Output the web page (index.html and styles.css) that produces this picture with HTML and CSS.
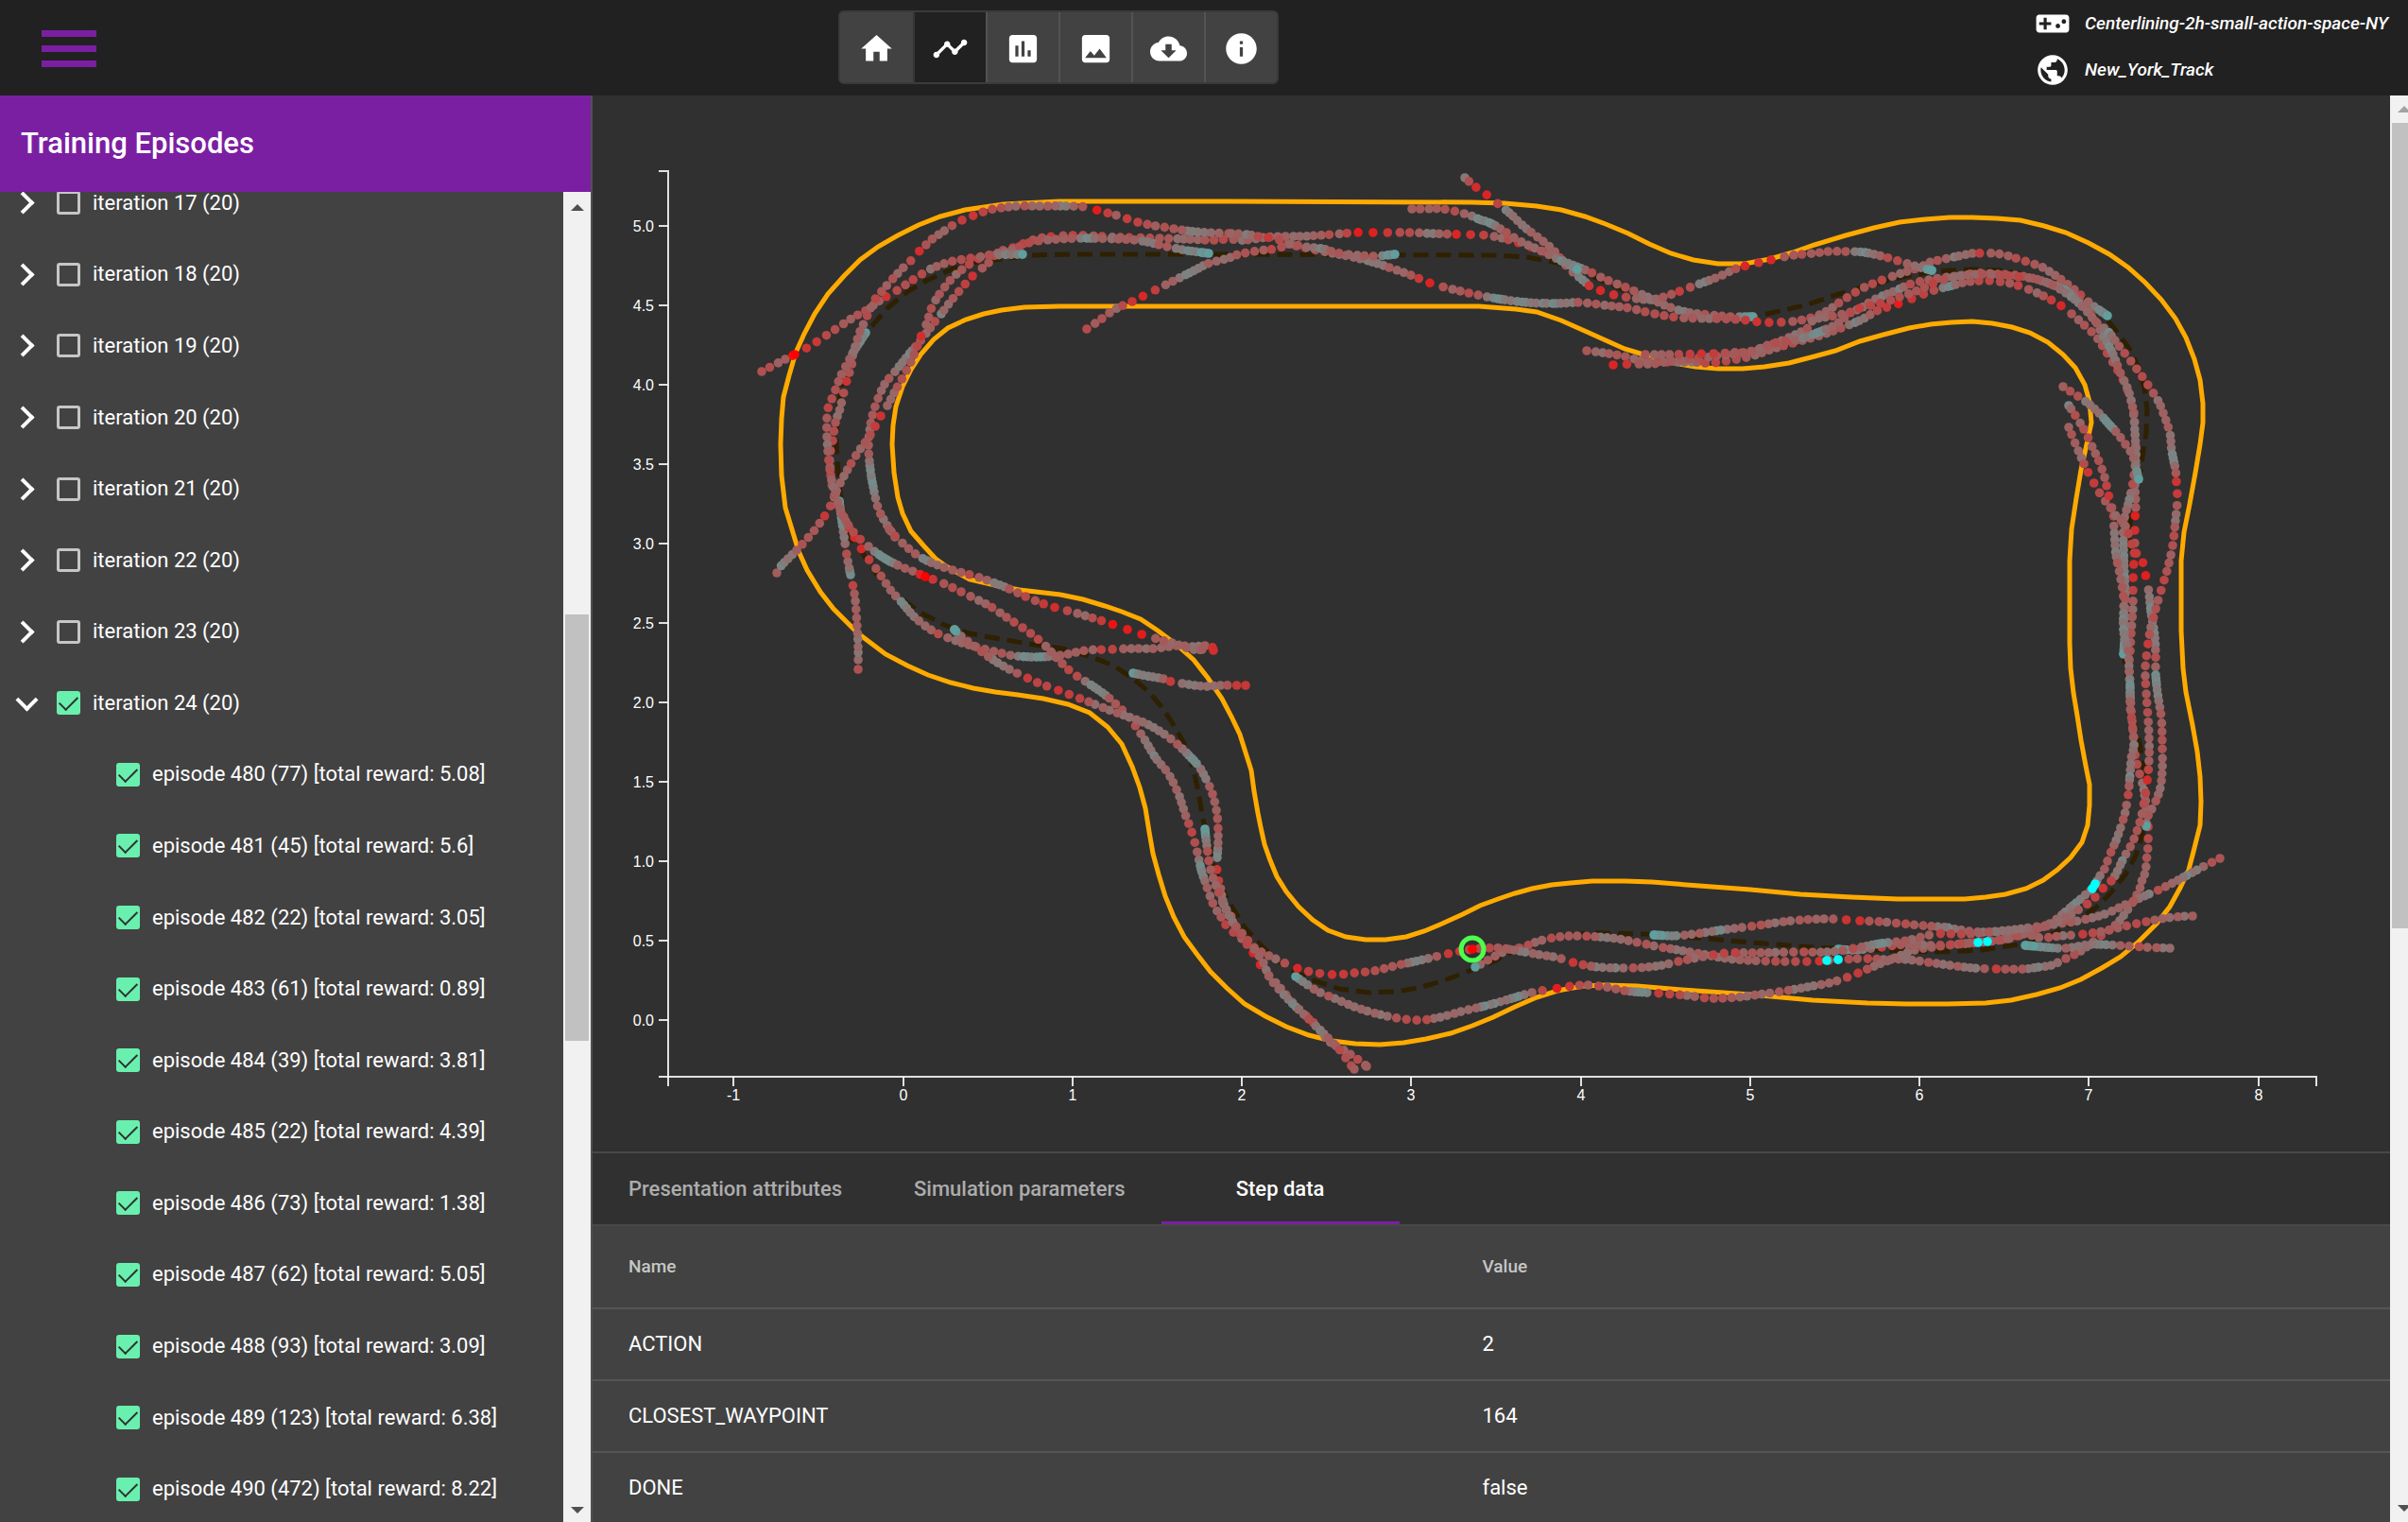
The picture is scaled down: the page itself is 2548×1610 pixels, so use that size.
FILE: index.html
```html
<!DOCTYPE html>
<html lang="en">
<head>
<meta charset="utf-8">
<title>Training Episodes</title>
<link rel="stylesheet" href="styles.css">
</head>
<body>
<header class="topbar">
  <button class="menu" aria-label="Menu"><span></span><span></span><span></span></button>
  <nav class="views">
    <button aria-label="Home"><svg viewBox="0 0 24 24"><path d="M10 20v-6h4v6h5v-8h3L12 3 2 12h3v8z"/></svg></button>
    <button class="on" aria-label="Track"><svg viewBox="0 0 24 24"><path d="M23 8c0 1.1-.9 2-2 2-.18 0-.35-.02-.51-.07l-3.56 3.55c.05.16.07.34.07.52 0 1.1-.9 2-2 2s-2-.9-2-2c0-.18.02-.36.07-.52l-2.55-2.55c-.16.05-.34.07-.52.07s-.36-.02-.52-.07l-4.55 4.56c.05.16.07.33.07.51 0 1.1-.9 2-2 2s-2-.9-2-2 .9-2 2-2c.18 0 .35.02.51.07l4.56-4.55C8.02 9.36 8 9.18 8 9c0-1.1.9-2 2-2s2 .9 2 2c0 .18-.02.36-.07.52l2.55 2.55c.16-.05.34-.07.52-.07s.36.02.52.07l3.55-3.56C19.02 8.35 19 8.18 19 8c0-1.1.9-2 2-2s2 .9 2 2z"/></svg></button>
    <button aria-label="Statistics"><svg viewBox="0 0 24 24"><path d="M19 3H5c-1.1 0-2 .9-2 2v14c0 1.1.9 2 2 2h14c1.1 0 2-.9 2-2V5c0-1.1-.9-2-2-2zM9 17H7v-7h2v7zm4 0h-2V7h2v10zm4 0h-2v-4h2v4z"/></svg></button>
    <button aria-label="Images"><svg viewBox="0 0 24 24"><path d="M21 19V5c0-1.1-.9-2-2-2H5c-1.1 0-2 .9-2 2v14c0 1.1.9 2 2 2h14c1.1 0 2-.9 2-2zM8.500 13.500l2.500 3.010L14.500 12l4.500 6H5l3.500-4.500z"/></svg></button>
    <button aria-label="Download"><svg viewBox="0 0 24 24"><path d="M19.350 10.040C18.670 6.590 15.640 4 12 4 9.110 4 6.600 5.640 5.350 8.040 2.340 8.360 0 10.910 0 14c0 3.310 2.690 6 6 6h13c2.760 0 5-2.240 5-5 0-2.640-2.050-4.780-4.650-4.960zM17 13l-5 5-5-5h3V9h4v4h3z"/></svg></button>
    <button aria-label="About"><svg viewBox="0 0 24 24"><path d="M12 2C6.480 2 2 6.480 2 12s4.480 10 10 10 10-4.480 10-10S17.520 2 12 2zm1 15h-2v-6h2v6zm0-8h-2V7h2v2z"/></svg></button>
  </nav>
  <div class="session">
    <div class="fact"><svg viewBox="0 0 24 24"><path d="M21 6H3c-1.100 0-2 .9-2 2v8c0 1.100.9 2 2 2h18c1.100 0 2-.9 2-2V8c0-1.100-.9-2-2-2zm-10 7H8v3H6v-3H3v-2h3V8h2v3h3v2zm4.500 2c-.83 0-1.500-.67-1.500-1.500s.67-1.500 1.500-1.500 1.500.67 1.500 1.500-.67 1.500-1.500 1.500zm4-3c-.83 0-1.500-.67-1.500-1.500S18.670 9 19.500 9s1.500.67 1.500 1.500-.67 1.500-1.500 1.500z"/></svg><span>Centerlining-2h-small-action-space-NY</span></div>
    <div class="fact"><svg viewBox="0 0 24 24"><path d="M12 2C6.480 2 2 6.480 2 12s4.480 10 10 10 10-4.480 10-10S17.520 2 12 2zm-1 17.930c-3.950-.49-7-3.850-7-7.930 0-.62.08-1.210.21-1.790L9 15v1c0 1.100.9 2 2 2v1.930zm6.900-2.540c-.26-.81-1-1.390-1.900-1.390h-1v-3c0-.55-.45-1-1-1H8v-2h2c.55 0 1-.45 1-1V7h2c1.100 0 2-.9 2-2v-.41c2.930 1.190 5 4.060 5 7.410 0 2.080-.8 3.970-2.100 5.390z"/></svg><span>New_York_Track</span></div>
  </div>
</header>
<div class="body">
  <aside class="side">
    <h1>Training Episodes</h1>
    <div class="pane">
      <ul class="tree" id="tree">
        <li><button class="twist" aria-label="Expand"></button><input type="checkbox" id="i17"><label for="i17">iteration 17 (20)</label></li>
        <li><button class="twist" aria-label="Expand"></button><input type="checkbox" id="i18"><label for="i18">iteration 18 (20)</label></li>
        <li><button class="twist" aria-label="Expand"></button><input type="checkbox" id="i19"><label for="i19">iteration 19 (20)</label></li>
        <li><button class="twist" aria-label="Expand"></button><input type="checkbox" id="i20"><label for="i20">iteration 20 (20)</label></li>
        <li><button class="twist" aria-label="Expand"></button><input type="checkbox" id="i21"><label for="i21">iteration 21 (20)</label></li>
        <li><button class="twist" aria-label="Expand"></button><input type="checkbox" id="i22"><label for="i22">iteration 22 (20)</label></li>
        <li><button class="twist" aria-label="Expand"></button><input type="checkbox" id="i23"><label for="i23">iteration 23 (20)</label></li>
        <li><button class="twist open" aria-label="Collapse"></button><input type="checkbox" id="i24" checked><label for="i24">iteration 24 (20)</label></li>
        <li class="leaf"><input type="checkbox" id="e480" checked><label for="e480">episode 480 (77) [total reward: 5.08]</label></li>
        <li class="leaf"><input type="checkbox" id="e481" checked><label for="e481">episode 481 (45) [total reward: 5.6]</label></li>
        <li class="leaf"><input type="checkbox" id="e482" checked><label for="e482">episode 482 (22) [total reward: 3.05]</label></li>
        <li class="leaf"><input type="checkbox" id="e483" checked><label for="e483">episode 483 (61) [total reward: 0.89]</label></li>
        <li class="leaf"><input type="checkbox" id="e484" checked><label for="e484">episode 484 (39) [total reward: 3.81]</label></li>
        <li class="leaf"><input type="checkbox" id="e485" checked><label for="e485">episode 485 (22) [total reward: 4.39]</label></li>
        <li class="leaf"><input type="checkbox" id="e486" checked><label for="e486">episode 486 (73) [total reward: 1.38]</label></li>
        <li class="leaf"><input type="checkbox" id="e487" checked><label for="e487">episode 487 (62) [total reward: 5.05]</label></li>
        <li class="leaf"><input type="checkbox" id="e488" checked><label for="e488">episode 488 (93) [total reward: 3.09]</label></li>
        <li class="leaf"><input type="checkbox" id="e489" checked><label for="e489">episode 489 (123) [total reward: 6.38]</label></li>
        <li class="leaf"><input type="checkbox" id="e490" checked><label for="e490">episode 490 (472) [total reward: 8.22]</label></li>
      </ul>
      <div class="bar bar-side"><i class="arrow up"></i><i class="before"></i><i class="thumb"></i><i class="after"></i><i class="arrow down"></i></div>
    </div>
  </aside>
  <main class="main">
    <div class="content">
      <svg class="chart" id="chart" viewBox="627 101 1902 1117" role="img" aria-label="Track with episode steps"></svg>
      <div class="tabs" role="tablist">
        <button role="tab">Presentation attributes</button>
        <button role="tab">Simulation parameters</button>
        <button role="tab" class="on" aria-selected="true">Step data</button>
      </div>
      <table class="steps">
        <thead><tr><th>Name</th><th>Value</th></tr></thead>
        <tbody>
          <tr><td>ACTION</td><td>2</td></tr>
          <tr><td>CLOSEST_WAYPOINT</td><td>164</td></tr>
          <tr><td>DONE</td><td>false</td></tr>
        </tbody>
      </table>
    </div>
    <div class="bar bar-main"><i class="arrow up dim"></i><i class="thumb"></i><i class="after"></i><i class="arrow down"></i></div>
  </main>
</div>
<script src="chart.js"></script>
</body>
</html>
```
FILE: styles.css
```css
* { box-sizing: border-box; }
body {
  margin: 0;
  height: 100vh;
  display: flex;
  flex-direction: column;
  overflow: hidden;
  background: #303030;
  color: #fff;
  font: 22px/32px Roboto, "Liberation Sans", sans-serif;
}
button { font: inherit; color: inherit; border: 0; background: none; padding: 0; }

.topbar {
  flex: 0 0 101px;
  display: flex;
  justify-content: space-between;
  align-items: flex-start;
  padding-left: 44px;
  background: #212121;
}
.menu { width: 58px; margin-top: 32px; display: grid; gap: 9px; }
.menu span { height: 7px; background: #7b1fa2; }
.views {
  display: flex;
  height: 78px;
  margin-top: 11px;
  border: 2px solid #3a3a3a;
  border-radius: 6px;
  background: #424242;
  overflow: hidden;
}
.views button { width: 77px; padding-top: 3px; display: grid; place-items: center; }
.views button + button { border-left: 2px solid #535353; }
.views button.on { background: #212121; border-left-color: #363636; }
.views svg { width: 39px; height: 39px; fill: #fff; }
.session { flex: 0 0 411px; padding-left: 16px; }
.fact { display: flex; align-items: center; gap: 15px; height: 49px; font-size: 19px; font-weight: 500; font-style: italic; white-space: nowrap; }
.fact svg { width: 38px; height: 38px; fill: #fff; }

.body { flex: 1; min-height: 0; display: flex; }
.side {
  flex: 0 0 627px;
  display: flex;
  flex-direction: column;
  background: #424242;
  border-right: 2px solid #515151;
}
.side h1 {
  flex: 0 0 101px;
  margin: 0;
  padding-left: 22px;
  line-height: 102px;
  font-size: 31px;
  font-weight: 500;
  background: #7b1fa2;
}
.pane { flex: 1; min-height: 0; display: flex; overflow: hidden; }
.tree {
  flex: 1;
  margin: -26px 0 -3px;
  padding: 0;
  list-style: none;
  display: grid;
  grid-auto-rows: minmax(60px, 1fr);
}
.tree li { display: flex; align-items: center; padding-left: 16px; }
.tree .leaf { padding-left: 123px; }
.twist { width: 26px; height: 26px; margin-right: 18px; display: grid; place-items: center; }
.twist::before {
  content: "";
  width: 13px;
  height: 13px;
  border: solid #fff;
  border-width: 4px 4px 0 0;
  transform: translateX(-5px) rotate(45deg);
}
.twist.open::before { transform: translate(-1px, -3px) rotate(135deg); }
.tree input {
  appearance: none;
  width: 25px;
  height: 25px;
  margin: 0 13px 0 0;
  border: 3px solid #c6c6c6;
  border-radius: 3px;
  display: grid;
  place-items: center;
}
.tree input:checked { border: 0; background: #69f0ae; }
.tree input:checked::before {
  content: "";
  width: 9px;
  height: 17px;
  border: solid #303030;
  border-width: 0 2px 2px 0;
  transform: translateY(-2px) rotate(45deg);
}

.bar { display: flex; flex-direction: column; background: #f1f1f1; overflow: hidden; }
.arrow { flex: 0 0 29px; width: 29px; display: grid; place-items: center; }
.arrow::before {
  content: "";
  border: 7px solid transparent;
  border-top-width: 0;
  border-bottom-color: #505050;
}
.arrow.down::before { border-width: 7px 7px 0; border-top-color: #505050; }
.arrow.dim::before { border-bottom-color: #a3a3a3; }
.thumb { width: 25px; margin-left: 2px; background: #c1c1c1; }
.bar-side { flex: 0 0 29px; }
.bar-side .arrow { padding-top: 3px; }
.bar-side .before { flex: 418; }
.bar-side .thumb { flex: 452; }
.bar-side .after { flex: 480; }
.bar-main { flex: 0 0 19px; }
.bar-main .thumb { flex: 852; }
.bar-main .after { flex: 599; }

.main { flex: 1; min-width: 0; display: flex; }
.content { flex: 1; min-width: 0; overflow: hidden; background: #424242; }
.chart { display: block; width: 100%; height: auto; background: #303030; }
.edge { fill: none; stroke: #ffaa00; stroke-width: 5; }
.center { fill: none; stroke: #2e2000; stroke-width: 5; stroke-dasharray: 16 8; }
.axis { fill: none; stroke: #fff; stroke-width: 2; stroke-opacity: .85; }
.tick { fill: #fff; font: 16px "Liberation Sans", Arial, sans-serif; }
.picked { fill: none; stroke: #4dff4d; stroke-width: 5; }

.tabs {
  display: flex;
  height: 79px;
  border: solid #484848;
  border-width: 2px 0;
  background: #303030;
}
.tabs button { min-width: 252px; padding: 3px 38px 0; font-weight: 500; color: #acacac; border-bottom: 3px solid transparent; }
.tabs button.on { color: #fff; border-color: #7b1fa2; }
.steps { width: 100%; border-collapse: collapse; table-layout: fixed; }
.steps th, .steps td { height: 76px; padding: 0 0 0 38px; text-align: left; border-bottom: 2px solid #555; }
.steps th { height: 87px; font-size: 19px; font-weight: 500; color: #c6c6c6; }
.steps th:first-child { width: 49.5%; }
.steps th + th, .steps td + td { padding-left: 0; }
```
FILE: chart.js
```js
// Track borders and centre line, in chart coordinates.
const OUTER = "1121,213 1062,216 1021,222 995,229 972,238 950,249 929,261 910,275 893,292 876,311 862,332 851,353 842,373 835,397 829,420 827,443 826,470 827,503 831,537 838,560 845,583 854,603 868,626 882,644 908,670 937,692 960,704 982,714 1006,722 1030,728 1053,732 1077,735 1104,739 1130,745 1153,754 1172,769 1187,787 1198,811 1206,833 1212,855 1216,880 1220,903 1226,925 1233,948 1242,970 1253,991 1267,1010 1281,1028 1298,1045 1317,1062 1339,1075 1361,1086 1385,1095 1409,1101 1434,1104 1460,1105 1485,1103 1509,1099 1535,1093 1558,1085 1580,1076 1603,1065 1626,1055 1648,1048 1675,1043 1699,1042 1732,1043 1780,1047 1852,1052 1918,1058 1976,1061 2017,1062 2061,1062 2101,1061 2128,1058 2155,1052 2180,1045 2202,1036 2224,1024 2244,1012 2262,997 2282,977 2296,959 2307,939 2316,920 2322,897 2328,873 2329,848 2328,822 2325,795 2320,767 2313,732 2310,707 2308,667 2308,633 2308,593 2311,563 2317,533 2323,500 2328,470 2331,447 2331,427 2328,402 2322,380 2313,357 2302,337 2287,317 2270,299 2252,283 2232,269 2210,257 2186,246 2163,239 2138,233 2113,231 2087,230 2063,230 2037,232 2010,235 1983,241 1953,249 1920,259 1897,267 1873,274 1846,279 1818,279 1792,275 1768,268 1745,258 1723,247 1699,237 1677,229 1652,222 1626,218 1592,215 1557,214 1300,213";
const INNER = "1300,324 1121,324 1084,325 1060,328 1041,332 1022,338 1003,347 988,359 975,374 964,391 955,409 948,430 945,450 944,470 946,500 950,526 955,543 964,562 978,578 990,591 1001,599 1026,613 1057,620 1079,624 1122,629 1146,634 1169,641 1187,647 1207,655 1225,667 1245,682 1263,698 1278,717 1293,739 1303,758 1312,777 1318,796 1324,815 1327,837 1331,860 1334,875 1338,893 1344,910 1351,927 1361,943 1374,959 1389,973 1405,984 1424,991 1445,994 1466,994 1488,991 1507,985 1526,977 1548,967 1566,958 1585,951 1603,945 1621,940 1642,936 1662,934 1685,932 1719,932 1748,933 1798,937 1852,941 1905,946 1959,949 2008,951 2048,951 2079,951 2101,949 2122,946 2144,940 2162,931 2177,920 2191,907 2203,891 2209,873 2211,852 2211,830 2207,810 2202,783 2198,757 2194,733 2191,707 2190,680 2190,633 2190,593 2192,560 2197,527 2202,497 2208,470 2213,447 2211,425 2206,407 2196,389 2183,375 2167,362 2148,352 2129,346 2108,342 2087,340 2065,341 2043,343 2020,347 1993,354 1968,361 1942,371 1920,377 1893,384 1867,388 1844,390 1818,390 1794,388 1766,383 1739,375 1719,369 1699,360 1679,351 1652,339 1626,330 1604,327 1565,324";
const CENTER = "1300,269 1133,269 1092,270 1027,278 1011,283 980,297 958,310 940,325 925,342 913,357 901,377 892,403 886,437 885,470 887,500 890,533 901,570 914,587 928,608 946,627 972,647 999,661 1026,670 1053,675 1088,681 1124,686 1155,695 1178,704 1198,717 1216,732 1231,750 1245,772 1256,792 1263,815 1268,837 1272,862 1276,880 1285,920 1298,950 1317,981 1336,1002 1362,1024 1389,1037 1417,1046 1448,1050 1476,1049 1501,1045 1526,1038 1552,1028 1581,1017 1609,1002 1650,990 1687,987 1740,988 1807,993 1865,998 1918,1002 1985,1005 2052,1007 2097,1005 2142,998 2168,990 2195,975 2218,960 2233,945 2249,925 2260,905 2267,883 2270,850 2268,807 2263,782 2257,757 2248,697 2247,633 2252,577 2254,553 2262,517 2267,483 2271,457 2272,433 2269,410 2262,387 2252,367 2237,347 2217,323 2183,303 2150,292 2117,286 2083,285 2050,287 2017,292 1977,302 1943,312 1910,323 1865,333 1814,337 1751,321 1707,302 1675,288 1648,278 1616,272 1584,270";

// Episode paths: x,y or x,y,throttle (0 = cyan, 1 = red).
const EPISODES = [
  "947,568 937,553 929,537 924,515,.45 921,497,.48 919,473 921,450 925,433 931,417 937,405 948,392 960,377,.5 972,363 982,350 991,338 996,332,.45 1005,320 1020,302 1028,293,.8 1045,279 1056,267 1072,262 1096,253 1116,250,.8 1146,249 1182,251 1227,252 1256,253,.45 1282,254 1300,253,.78 1316,254 1340,251 1357,250 1377,250 1395,249 1422,247 1432,246,.8 1458,246,.78 1494,246 1513,247,.5 1545,248,.85 1573,249 1594,253 1622,262,.9 1644,270 1656,277,.45 1668,282,.45 1681,287 1700,296 1725,306 1747,316 1764,324 1784,330,.45 1808,333 1832,335 1855,335,.38",
  "822,606 827,598,.5 843,582 854,570 864,558 875,542,.8 881,530 888,513 905,483 921,460 932,440,.8 939,429 948,412 957,396 966,378 976,352,.82 981,341 986,325 995,310 1007,295 1021,283 1039,272 1068,265 1092,256 1121,253 1150,252,.45 1186,253 1209,255,.5 1231,260 1256,265,.5 1279,268,.38",
  "806,393 829,381 841,375,1 850,370 859,365,.88 880,351 901,337 917,328,.75 928,320 939,313,.8 948,308 957,302 972,292 986,284,.48 1005,277 1028,273 1052,270 1082,269,.38",
  "908,708 908,685 907,663 905,635 903,622,.78 900,608,.5 896,587 892,560,.5 888,530,.38",
  "916,352,.38 911,360,.45 903,373 901,387 895,406,.85 889,432,.48 884,447 881,467 878,483 879,503 882,520 890,543 896,553 905,570,.8 915,586,.8 928,603 943,625 955,638,.5 968,653,.48 988,668 1012,678 1035,685 1064,692 1075,694,.42 1099,695,.42 1124,693 1149,688 1175,687,.75 1200,686 1222,686 1245,683 1262,684,.5 1280,683 1284,688,.82",
  "1300,247 1263,245 1236,241 1217,238 1204,235,.8 1182,228 1160,222,.85 1150,219 1129,218,.5 1099,218 1077,218 1052,221 1041,224 1020,232,.8 1007,239 998,245 985,254 977,262 968,270,.85 962,278 955,284 941,299 935,306 925,318 915,340 909,353 903,372 890,397 882,418 876,433 875,462 879,503 885,525 892,545 903,563 919,578 929,586,.45 940,593,.45 957,601 968,605 979,610,1 998,617 1019,627 1047,641 1065,653 1082,664 1097,675 1108,685,.5 1120,698 1135,712 1155,725,.5 1173,738 1193,757 1209,779 1223,802,.5 1236,818 1247,840,.48 1254,861 1262,883,.78 1267,902 1271,920,.42 1276,935 1284,957 1294,973 1300,982,.8 1315,994 1326,1008,.9 1336,1024,.8 1352,1042 1372,1065 1393,1085 1407,1102,.5 1424,1112 1440,1123 1446,1128",
  "1303,247 1319,248,.55 1337,251,.8 1349,252 1363,258 1385,263 1405,267 1422,270 1448,276,.5 1470,283 1490,290 1515,300,.78 1537,306 1559,311 1585,316,.48 1616,320,.42 1648,321,.45 1672,320 1699,323 1724,326 1751,332 1778,336 1810,337 1840,338 1867,341,.8 1897,340 1920,335 1935,328 1945,321 1967,307 1987,298 2015,288 2033,282 2043,277 2053,275 2067,272,.45 2087,268 2097,268,.8 2118,269 2154,280 2165,285,.5 2180,295 2197,308 2213,322 2230,334,.38",
  "1150,348 1166,337 1180,327 1198,319,.8 1218,309,.82 1240,298 1264,286,.5 1278,279 1300,273 1311,269 1333,265 1351,263,.8 1365,258 1379,261 1399,263,.45 1418,268 1452,271 1476,269,.38",
  "1550,188,.5 1559,196,.85 1569,203 1577,209,.95 1588,218 1598,226,.5 1614,241 1630,253 1644,265 1658,282 1677,298,.5 1683,303,.8 1704,311,.85 1725,315 1747,317 1764,313 1780,307,.8 1799,300,.48 1818,293 1835,285 1848,281,.8 1873,275,.85 1897,270 1919,268 1935,266 1953,266 1973,267,.45 1995,272 2015,278 2032,283 2044,286,.38",
  "1494,221 1506,221 1527,221 1553,227 1565,232,.42 1577,236,.42 1594,246 1608,255 1634,267 1656,278,.45 1669,285,.38",
  "1679,371 1695,373 1719,377 1739,382 1762,383 1790,383,.5 1810,384,.8 1832,381 1853,377 1873,370 1897,363 1915,358 1932,353 1953,345 1970,338,.45 1988,328 2007,322,.8 2028,314 2047,307 2062,303,.45 2083,298 2107,297 2128,300 2138,303,.8 2158,311 2177,321,.9 2187,328 2200,339 2217,355 2228,371 2238,387 2247,403 2253,418,.75 2258,437 2259,453,.75 2260,477 2260,493,.75 2259,513 2260,533 2259,551,.92 2259,570 2258,593,.78 2257,617,.88 2257,640 2255,670 2254,690 2253,702,.8 2254,733,.42 2255,750 2257,773 2259,797,.75 2263,815,.8 2268,833 2271,853 2273,873,.8 2273,893 2272,903 2270,922 2266,933 2263,943 2253,960 2239,978 2220,992 2213,998 2200,1007 2186,1014 2171,1021 2157,1023,.48 2142,1025 2110,1025,.8 2088,1024,.42 2070,1022 2048,1019 2017,1015 1994,1015 1968,1014 1933,1016,.8 1918,1017,.8 1883,1017 1852,1016 1827,1014 1805,1010 1776,1005 1752,1001 1728,996 1703,992 1670,990 1650,991 1630,995 1611,1002,.78 1595,1005 1572,1017 1561,1023,.38",
  "1707,386,.8 1731,385 1748,385 1762,383 1786,380 1814,377 1845,373 1865,368 1893,357 1913,347 1920,338 1947,333 1967,327 1983,317 2007,307,.5 2023,300 2047,295 2070,292 2092,289 2113,290 2140,292 2163,298 2183,306,.42 2200,318 2213,333,.75 2220,345 2235,373,.5 2243,393 2252,413 2257,433 2259,457 2260,483 2257,510 2252,533,.45 2247,553 2247,577,.5 2248,607,.42 2249,633 2249,660,.5 2247,692,.38",
  "2189,452 2195,467 2204,488 2208,497,.8 2213,506,.8 2222,522 2230,533 2236,543,.8 2237,560 2239,587,.5 2243,607 2247,633 2247,667,.45 2252,690 2253,710 2254,727,.42 2254,747 2256,763 2258,787,.5 2255,803 2254,818,.42 2252,840 2249,858 2245,872 2240,887,.5 2233,903 2226,921 2221,928,.5 2214,940 2206,947,.48 2191,960,.48 2169,977 2142,988 2120,994 2093,997 2070,999 2044,1002 2026,1005 2008,1012,.5 1981,1023 1962,1031,.8 1939,1039 1918,1043,.48 1890,1048 1861,1052 1838,1055 1810,1056 1785,1053 1760,1051,.8 1742,1050,.5 1719,1048 1699,1044 1675,1042 1644,1046,.8 1621,1050 1597,1057,.48 1572,1064,.42 1550,1069 1524,1076 1505,1079,.75 1485,1078 1468,1075,.55 1452,1071 1433,1065 1414,1057 1395,1049 1381,1040,.45 1371,1033,.38",
  "2189,429,.5 2197,441 2206,456 2214,473 2221,488 2227,505 2231,523,.82 2237,543 2247,553 2253,567,.8 2258,582,.8 2266,591,.78 2269,603,.78 2272,616,.78 2274,628,.5 2276,647,.42 2280,673,.48 2281,697 2281,713,.42 2283,733,.45 2287,760 2288,790 2288,813 2286,833 2280,850 2273,863 2271,874,.38",
  "2183,409 2197,418 2210,427,.5 2222,438,.48 2230,447,.42 2240,458 2249,470 2257,483 2263,507,.38",
  "2349,908 2333,916 2316,925,.5 2299,934 2283,942 2271,947,.5 2249,957 2227,967 2200,974 2173,978 2142,984 2097,986 2070,983 2059,981,.5 2034,979 2012,977 1990,975 1968,974,.78 1936,972 1909,973 1887,975 1860,979 1836,982 1820,984,.45 1793,988 1771,990,.45 1750,989,.38",
  "2296,1003 2271,1002 2240,1000 2213,999,.5 2186,1003 2164,1002,.45 2143,1000,.38",
  "2320,969 2314,969,.5 2293,971 2271,975 2252,979,.75 2231,984 2206,988,.75 2181,990 2159,992 2142,988 2119,994 2079,998 2048,1000 2017,999 1990,1002 1963,1005,.45 1945,1004,.38",
  "1741,375 1768,375 1812,374,.75 1834,373 1853,372 1877,363 1900,360 1923,352,.42 1943,343 1963,328 1993,320,.8 2013,313 2030,307 2048,299,.85 2073,292 2100,290 2127,292 2153,295 2173,302 2193,315,.45 2207,328 2220,343 2230,350,.42 2243,367 2257,385 2270,403 2283,423,.5 2289,437 2296,458 2298,477,.42 2302,497 2303,512,.78 2304,528 2302,550 2299,577 2294,600 2288,620 2283,637 2279,652,.8 2275,668 2272,688,.78 2270,708 2271,733 2273,760 2274,780 2274,803 2272,827,.85 2269,847 2265,867 2257,890 2247,908,.5 2237,928 2229,936,.8 2221,944 2213,953,.85 2195,965 2173,977 2142,982 2115,985 2081,988 2048,988 2017,995 1990,998,.45 1963,1003 1936,1007,.42 1901,1007 1860,1008 1829,1008,.75 1802,1012 1776,1017 1753,1022,.45 1723,1024 1691,1023,.5 1668,1019,.8 1648,1013 1630,1010 1613,1007,.5 1589,1003 1573,1003 1558,1004,.7 1536,1008,.8 1515,1013 1493,1018,.55 1479,1021 1454,1027 1434,1029 1414,1031,.78 1392,1029,.78 1372,1024,.82 1347,1013 1328,1003 1311,987 1303,970 1295,957,.42 1291,937 1288,925,.85 1288,908,.42 1289,887 1288,863 1283,840 1275,822,.48 1268,810,.5 1254,795,.5 1238,781 1216,767 1196,759 1176,752 1151,742 1122,731,.85 1100,723 1093,720,.85 1066,707 1048,696 1030,683 1017,673 1010,666,.38",
  "941,560 948,568 966,584 981,593,.45 1001,601 1030,609 1048,615,.5 1068,623 1092,634 1111,641,.8 1137,648,.55 1160,655 1173,659,.88 1205,670,.88 1225,676 1240,680 1262,687 1272,687",
  "1275,877,.38 1276,887,.45 1278,902 1281,920 1289,943 1303,973 1319,993 1336,1017,.45 1344,1035 1364,1058,.5 1385,1078 1397,1090,.45 1417,1110 1428,1125 1433,1131",
  "1199,712,.38 1213,715,.5 1231,718 1239,721,.78 1251,723,.48 1274,726 1292,725 1305,725,.78 1318,725,.78"
];
const MATCHES = ["1933,1016", "1945,1015", "2093,997", "2103,996", "2214,940", "2217,935"];
const FASTEST = ["841,375", "979,610"];

const chart = document.getElementById("chart");
function add(tag, attrs, text) {
  const el = document.createElementNS("http://www.w3.org/2000/svg", tag);
  for (const k in attrs) el.setAttribute(k, attrs[k]);
  if (text) el.textContent = text;
  chart.append(el);
}
function dot(x, y, fill) {
  add("circle", { cx: x.toFixed(1), cy: y.toFixed(1), r: 4.8, fill: fill });
}
function mix(t) {
  const r = Math.round(255 * t), g = Math.round(255 * (1 - t));
  return `rgb(${r},${g},${g})`;
}
let seed = 11;
function random() {
  seed = (seed * 16807) % 2147483647;
  return seed / 2147483647;
}
function spline(a, b, c, d, u) {
  return 0.5 * (2 * b + (c - a) * u + (2 * a - 5 * b + 4 * c - d) * u * u + (3 * b - a - 3 * c + d) * u * u * u);
}
function level(point) {
  const t = point[2] || 0.64;
  return t > 0.4 && t < 0.5 ? t + 0.04 : t;
}

add("path", { class: "center", d: "M" + CENTER.split(" ").join("L") + "Z" });
add("path", { class: "edge", d: "M" + OUTER.split(" ").join("L") + "Z" });
add("path", { class: "edge", d: "M" + INNER.split(" ").join("L") + "Z" });

for (const line of EPISODES) {
  const p = line.split(" ").map(s => s.split(",").map(Number));
  let left = 0, px = p[0][0], py = p[0][1], drift = 0;
  for (let i = 0; i < p.length - 1; i++) {
    const a = p[Math.max(0, i - 1)], b = p[i], c = p[i + 1], d = p[Math.min(p.length - 1, i + 2)];
    const floor = b[2] === 0.38 || c[2] === 0.38 ? 0.37 : 0.45;
    for (let k = 0; k <= 24; k++) {
      const u = k / 24;
      const x = spline(a[0], b[0], c[0], d[0], u), y = spline(a[1], b[1], c[1], d[1], u);
      left -= Math.hypot(x - px, y - py);
      px = x; py = y;
      if (left > 0) continue;
      drift = drift * 0.5 + (random() - 0.5) * 0.14;
      const base = level(b) * (1 - u) + level(c) * u;
      const t = Math.max(floor, Math.min(0.93, base + drift));
      dot(x, y, mix(t));
      left = 2.5 + Math.max(0, t - 0.42) * 27;
    }
  }
  const end = p[p.length - 1];
  dot(end[0], end[1], mix(end[2] || 0.64));
}
for (const s of FASTEST) dot(...s.split(",").map(Number), "#f00");
for (const s of MATCHES) dot(...s.split(",").map(Number), "#0ff");
dot(1558, 1004, "#f00");
add("circle", { class: "picked", cx: 1558, cy: 1004, r: 12 });

add("path", { class: "axis", d: "M697,181H707V1139H697" });
add("path", { class: "axis", d: "M707,1149V1139H2451V1149" });
for (let i = 0; i <= 10; i++) {
  const y = 1079 - 84 * i;
  add("path", { class: "axis", d: `M697,${y}H707` });
  add("text", { class: "tick", x: 692, y: y + 6, "text-anchor": "end" }, (i / 2).toFixed(1));
}
for (let i = -1; i <= 8; i++) {
  const x = Math.round(955.5 + 179.25 * i);
  add("path", { class: "axis", d: `M${x},1139V1149` });
  add("text", { class: "tick", x: x, y: 1164, "text-anchor": "middle" }, String(i));
}
```
